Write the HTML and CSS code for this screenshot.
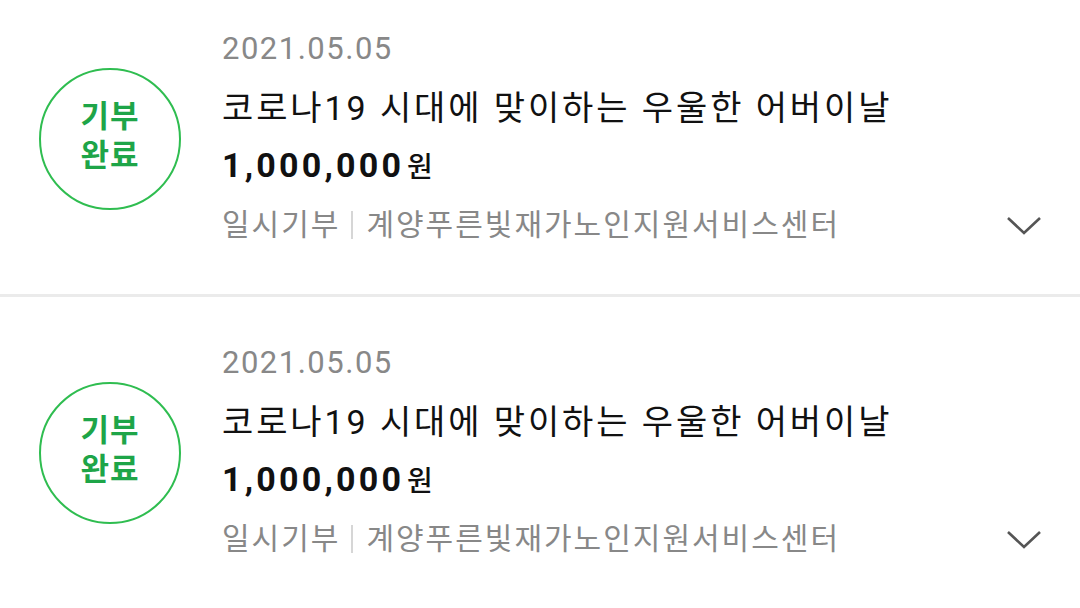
FILE: index.html
```html
<!DOCTYPE html>
<html lang="ko">
<head>
    <meta charset="UTF-8">
    <meta name="viewport" content="width=device-width, initial-scale=1.0">
    <title>기부 내역</title>
    <link rel="stylesheet" href="styles.css">
</head>
<body>
    <ul class="donation-list">
        <li class="donation-item">
            <div class="badge">기부<br>완료</div>
            <div class="info">
                <p class="date">2021.05.05</p>
                <p class="title">코로나19 시대에 맞이하는 우울한 어버이날</p>
                <p class="amount">1,000,000<span class="won">원</span></p>
                <p class="meta"><span>일시기부</span><span class="sep"></span><span>계양푸른빛재가노인지원서비스센터</span></p>
            </div>
            <svg class="toggle" width="36" height="20" viewBox="0 0 36 20">
                <path d="M2 2 L18 17 L34 2" fill="none" stroke="#555" stroke-width="2.6"/>
            </svg>
        </li>
        <li class="donation-item">
            <div class="badge">기부<br>완료</div>
            <div class="info">
                <p class="date">2021.05.05</p>
                <p class="title">코로나19 시대에 맞이하는 우울한 어버이날</p>
                <p class="amount">1,000,000<span class="won">원</span></p>
                <p class="meta"><span>일시기부</span><span class="sep"></span><span>계양푸른빛재가노인지원서비스센터</span></p>
            </div>
            <svg class="toggle" width="36" height="20" viewBox="0 0 36 20">
                <path d="M2 2 L18 17 L34 2" fill="none" stroke="#555" stroke-width="2.6"/>
            </svg>
        </li>
    </ul>
</body>
</html>
```

FILE: styles.css
```css
body {
    margin: 0;
    background-color: #fff;
    font-family: Roboto, "Noto Sans CJK KR", sans-serif;
    overflow: hidden;
}
.donation-list {
    list-style: none;
    margin: -17px 0 0 0;
    padding: 0;
}
.donation-item {
    display: flex;
    align-items: center;
    height: 314px;
    box-sizing: border-box;
    padding: 0 38px 0 39px;
    border-bottom: 3px solid #ebebeb;
}
.badge {
    width: 142px;
    height: 142px;
    box-sizing: border-box;
    padding-bottom: 12px;
    border: 2px solid #2fbd50;
    border-radius: 50%;
    display: flex;
    align-items: center;
    justify-content: center;
    text-align: center;
    color: #1ea548;
    font-family: "Noto Sans CJK KR", sans-serif;
    font-weight: 700;
    font-size: 31px;
    line-height: 39px;
    letter-spacing: 1px;
    flex-shrink: 0;
}
.info {
    flex: 1;
    margin-left: 41px;
    padding-bottom: 4px;
}
.info p {
    margin: 0;
}
.date {
    font-size: 31px;
    line-height: 60px;
    letter-spacing: 1.5px;
    color: #888;
}
.title {
    font-size: 34px;
    line-height: 58px;
    letter-spacing: 2.9px;
    color: #111;
}
.amount {
    font-size: 34px;
    font-weight: 700;
    line-height: 57px;
    letter-spacing: 3.2px;
    color: #111;
}
.won {
    font-size: 28px;
    font-weight: 500;
    letter-spacing: 0;
    margin-left: 3px;
}
.meta {
    display: flex;
    align-items: center;
    font-size: 30px;
    line-height: 58px;
    letter-spacing: 2px;
    color: #888;
}
.sep {
    width: 2px;
    height: 28px;
    background-color: #d6d6d6;
    margin: 0 13px 0 11px;
}
.toggle {
    align-self: flex-end;
    margin-bottom: 58px;
}
```
